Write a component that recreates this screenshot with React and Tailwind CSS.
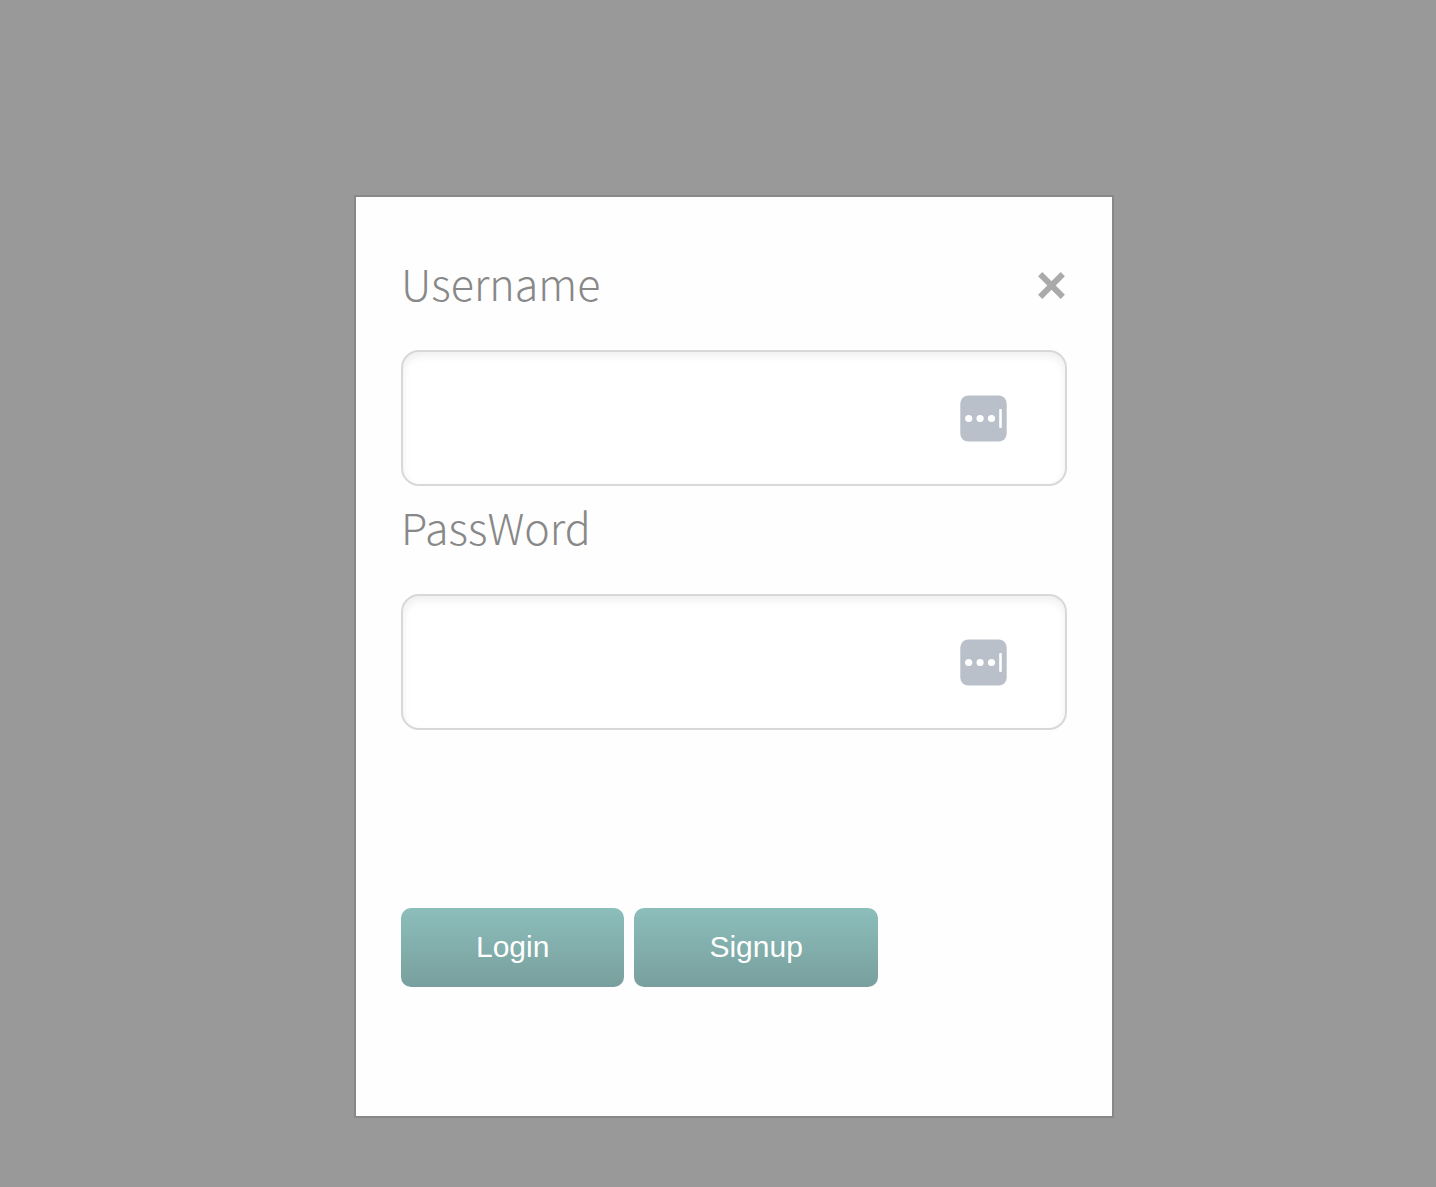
import React from 'react';

function AutofillIcon() {
  return (
    <svg viewBox="0 0 47 47" className="size-[47px]" aria-hidden="true">
      <rect x="0.3" y="0.5" width="46.4" height="46" rx="8" fill="#b9c0ca" />
      <circle cx="8.7" cy="23.5" r="3.6" fill="#fff" />
      <circle cx="20.1" cy="23.5" r="3.6" fill="#fff" />
      <circle cx="31.5" cy="23.5" r="3.6" fill="#fff" />
      <rect x="39.2" y="14" width="2.6" height="19" rx="1" fill="#fff" />
    </svg>
  );
}

function Field({ id, label, type, children }) {
  return (
    <div>
      <div className="mb-7 flex items-center justify-between">
        <label
          htmlFor={id}
          className="font-['Noto_Sans_CJK_SC','Noto_Sans',sans-serif] text-[43px] leading-[80px] font-light text-[#888]"
        >
          {label}
        </label>
        {children}
      </div>
      <div className="relative">
        <input
          id={id}
          type={type}
          className="block h-[136px] w-full rounded-[18px] border-2 border-[#d8d8d8] bg-white pr-[120px] pl-8 text-3xl text-[#888] shadow-[inset_0_4px_8px_rgba(0,0,0,0.07)] outline-none"
        />
        <button type="button" aria-label={`Fill ${label}`} className="absolute top-[45px] right-[60px]">
          <AutofillIcon />
        </button>
      </div>
    </div>
  );
}

function ActionButton({ type, children }) {
  return (
    <button
      type={type}
      className="h-[79px] rounded-[10px] bg-linear-to-b from-[#8cbebb] to-[#789f9d] px-[75px] pb-0.5 text-[30px] text-white"
    >
      {children}
    </button>
  );
}

export default function App() {
  return (
    <main className="flex min-h-screen items-start justify-center bg-[#999] pt-[195px] pb-[69px] pl-8 font-['Liberation_Sans',Arial,sans-serif]">
      <form
        role="dialog"
        aria-label="Login"
        onSubmit={(e) => e.preventDefault()}
        className="w-full max-w-[760px] border-2 border-[#888] bg-[#fefefe] px-[45px] pt-[45px] pb-[129px]"
      >
        <Field id="username" label="Username" type="text">
          <button type="button" aria-label="Close" className="mt-1.5 mr-0.5">
            <svg viewBox="0 0 27 27" className="size-[27px]" aria-hidden="true">
              <path d="M2.2 2.2 L24.8 24.8 M24.8 2.2 L2.2 24.8" stroke="#aaa" strokeWidth="6" />
            </svg>
          </button>
        </Field>
        <Field id="password" label="PassWord" type="password" />
        <div className="mt-[178px] flex gap-2.5">
          <ActionButton type="submit">Login</ActionButton>
          <ActionButton type="button">Signup</ActionButton>
        </div>
      </form>
    </main>
  );
}
